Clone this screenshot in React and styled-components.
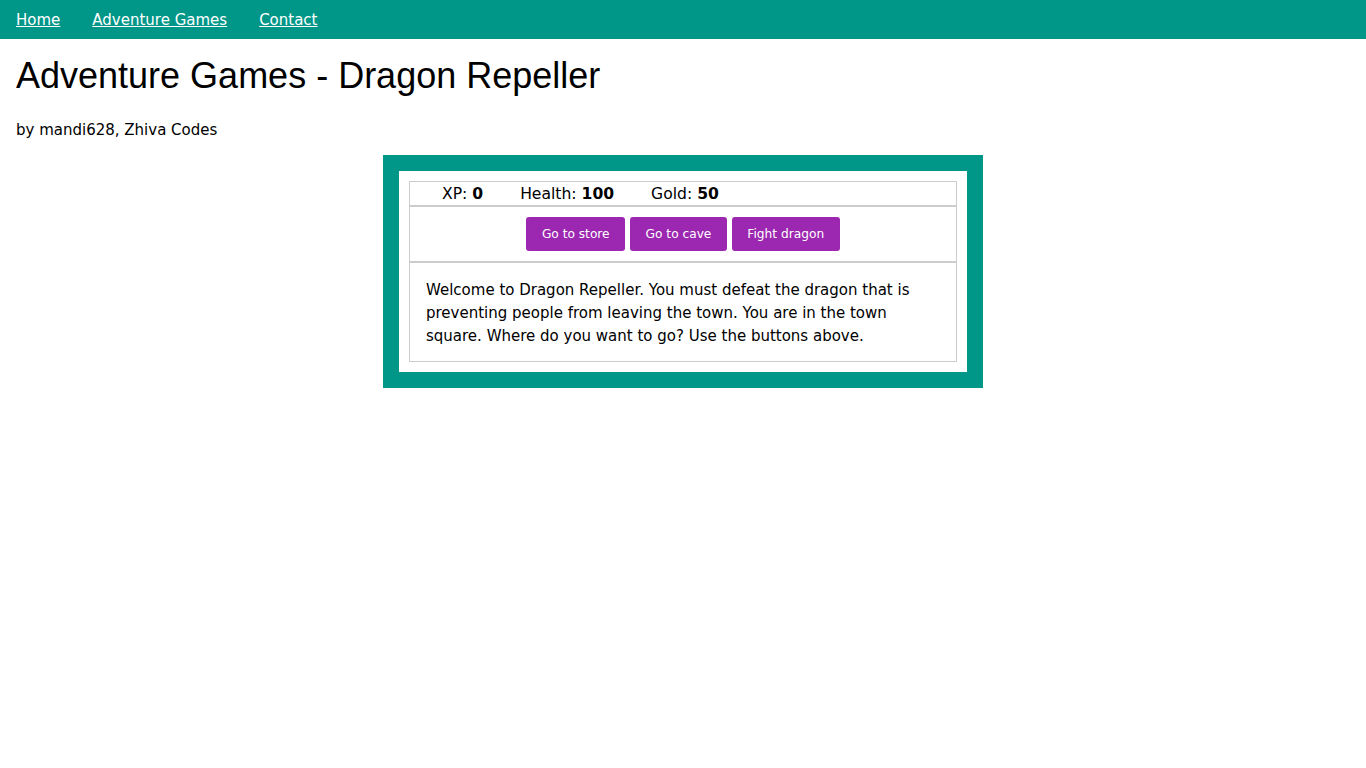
import React from "react";
import styled, { createGlobalStyle } from "styled-components";

const GlobalStyle = createGlobalStyle`
  html, body { margin: 0; padding: 0; background: #ffffff; }
  body { font-family: "DejaVu Sans", sans-serif; font-size: 15px; color: #000; }
`;

const NavBar = styled.nav`
  background: #009688;
  height: 39px;
  box-sizing: border-box;
  display: flex;
  align-items: center;
  padding: 2px 16px 0;
  gap: 32px;
`;

const NavLink = styled.a`
  color: #ffffff;
  text-decoration: underline;
  font-family: "DejaVu Sans", sans-serif;
  font-size: 15px;
  line-height: 19px;
`;

const Main = styled.main`
  padding: 0 16px;
`;

const Title = styled.h1`
  font-family: "Liberation Sans", Arial, sans-serif;
  font-weight: normal;
  font-size: 36px;
  line-height: 41px;
  margin: 16px 0 0;
`;

const Byline = styled.p`
  margin: 25px 0 0;
  font-size: 15px;
  line-height: 19px;
`;

const GameFrame = styled.div`
  width: 600px;
  box-sizing: border-box;
  margin: 15px auto 0;
  background: #009688;
  padding: 16px;
`;

const GameInner = styled.div`
  background: #ffffff;
  padding: 10px;
`;

const Stats = styled.div`
  border: 1px solid #cccccc;
  padding: 3px 16px 1px;
  line-height: 19px;
  font-size: 15.6px;
`;

const Stat = styled.span`
  padding: 0 16px;
  b { font-weight: bold; }
`;

const Controls = styled.div`
  border: 1px solid #cccccc;
  padding: 10px;
  display: flex;
  justify-content: center;
  gap: 5px;
`;

const Button = styled.button`
  background: #9c27b0;
  color: #ffffff;
  border: none;
  border-radius: 3px;
  font-family: "DejaVu Sans", sans-serif;
  font-size: 12.2px;
  line-height: 16px;
  height: 34px;
  padding: 0 15.5px;
  cursor: pointer;
`;

const TextBox = styled.div`
  border: 1px solid #cccccc;
  padding: 16px 16px 13px;
  line-height: 23px;
  font-size: 15px;
`;

export default function App() {
  return (
    <>
      <GlobalStyle />
      <NavBar>
        <NavLink href="#">Home</NavLink>
        <NavLink href="#">Adventure Games</NavLink>
        <NavLink href="#">Contact</NavLink>
      </NavBar>
      <Main>
        <Title>Adventure Games - Dragon Repeller</Title>
        <Byline>by mandi628, Zhiva Codes</Byline>
        <GameFrame>
          <GameInner>
            <Stats>
              <Stat>XP: <b>0</b></Stat>{" "}
              <Stat>Health: <b>100</b></Stat>{" "}
              <Stat>Gold: <b>50</b></Stat>
            </Stats>
            <Controls>
              <Button>Go to store</Button>
              <Button>Go to cave</Button>
              <Button>Fight dragon</Button>
            </Controls>
            <TextBox>
              Welcome to Dragon Repeller. You must defeat the dragon that is preventing people from leaving the town. You are in the town square. Where do you want to go? Use the buttons above.
            </TextBox>
          </GameInner>
        </GameFrame>
      </Main>
    </>
  );
}
